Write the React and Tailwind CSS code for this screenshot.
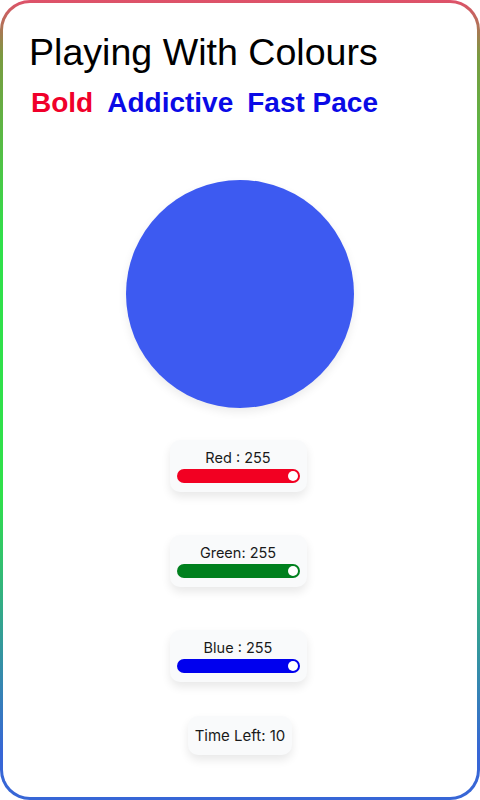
const sliders = [
  {label: 'Red : 255', track: 'bg-[#f20022]'},
  {label: 'Green: 255', track: 'bg-[#00801e]'},
  {label: 'Blue : 255', track: 'bg-[#0000ee]'},
];

const Slider = ({label, track}) => (
  <div className="w-[137px] rounded-[10px] bg-[#f9fafb] px-[7px] pt-[8px] pb-[9px] shadow-[0_5px_10px_rgba(0,0,0,0.09)]">
    <p className="text-center text-[14.5px] leading-[20px] text-[#1a1a1a] font-['Inter',sans-serif]">
      {label}
    </p>
    <div className={`relative mt-[1px] h-[14px] rounded-full ${track}`}>
      <span className="absolute right-[2px] top-[2px] h-[10px] w-[10px] rounded-full bg-white" />
    </div>
  </div>
);

export default function App() {
  return (
    <div className="h-[800px] w-[480px] bg-white">
      <div className="h-full w-full rounded-[30px] bg-[linear-gradient(to_bottom,#e0506a_0%,#7a9a40_7%,#30e04a_30%,#30e04a_62%,#3766d6_94%)] p-[3px]">
        <div className="flex h-full w-full flex-col rounded-[27px] bg-white font-['Liberation_Sans',Arial,sans-serif]">
          <h1 className="ml-[26px] mt-[31px] text-[37.6px] font-normal leading-none text-black">
            Playing With Colours
          </h1>
          <div className="ml-[28px] mt-[17px] flex gap-[14px] text-[28px] font-bold leading-none">
            <span className="text-[#f0002a]">Bold</span>
            <span className="text-[#0a0ae6]">Addictive</span>
            <span className="text-[#0a0ae6]">Fast Pace</span>
          </div>

          <div className="mt-[63px] flex flex-col items-center">
            <div className="h-[228px] w-[228px] rounded-full bg-[#3d5af1] shadow-[0_4px_10px_rgba(0,0,0,0.08)]" />

            <div className="mt-[32px] mr-[4px] flex flex-col items-center gap-[43px]">
              {sliders.map(s => (
                <Slider key={s.label} label={s.label} track={s.track} />
              ))}
            </div>

            <div className="mt-[34px] rounded-[10px] bg-[#f9fafb] px-[7px] py-[10px] text-[15px] leading-[19px] text-[#1a1a1a] font-['Inter',sans-serif] shadow-[0_5px_10px_rgba(0,0,0,0.09)]">
              Time Left: 10
            </div>
          </div>
        </div>
      </div>
    </div>
  );
}
